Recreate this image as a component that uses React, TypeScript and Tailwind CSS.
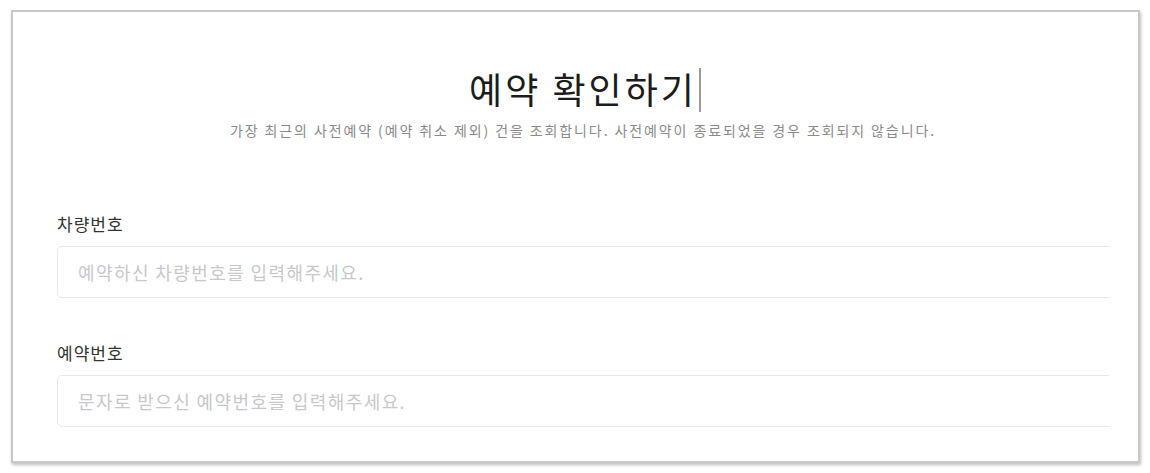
import React from 'react';

const font = { fontFamily: '"Noto Sans CJK KR", "Noto Sans", sans-serif' };

const Field: React.FC<{ label: string; placeholder: string; className?: string }> = ({ label, placeholder, className }) => (
    <div className={className}>
        <label className="block text-[17px] leading-[24px] tracking-[1px] text-[#333333]">{label}</label>
        <div className="mt-[10px] overflow-hidden">
            <input
                type="text"
                placeholder={placeholder}
                className="block w-[1100px] h-[52px] rounded-[5px] border border-[#e6e8ec] bg-white px-[20px] text-[18px] tracking-[1.4px] text-[#333] placeholder:text-[#c5c8ce] outline-none"
            />
        </div>
    </div>
);

export default function App() {
    return (
        <div className="w-[1150px] h-[473px] bg-white pt-[10px] pl-[11px]" style={font}>
            <div className="w-[1129px] h-[453px] border-2 border-[#c8c8c8] bg-white shadow-[1px_2px_3px_rgba(0,0,0,0.25)] pl-[44px] pr-[28px]">
                <div className="w-[1052px]">

                    {/* Heading */}
                    <div className="pt-[54px] text-center">
                        <h1 className="relative inline-block text-[36px] leading-[44px] tracking-[3px] text-[#1c1c1c]">
                            예약 확인하기
                            <span className="absolute right-[-4px] top-[2px] w-[2px] h-[44px] bg-[#9a9a9a]" />
                        </h1>
                        <p className="mt-[10px] text-[14px] leading-[20px] tracking-[1.9px] text-[#8a8a8a]">
                            가장 최근의 사전예약 (예약 취소 제외) 건을 조회합니다. 사전예약이 종료되었을 경우 조회되지 않습니다.
                        </p>
                    </div>

                    {/* Form */}
                    <Field className="mt-[72px]" label="차량번호" placeholder="예약하신 차량번호를 입력해주세요." />
                    <Field className="mt-[43px]" label="예약번호" placeholder="문자로 받으신 예약번호를 입력해주세요." />
                </div>
            </div>
        </div>
    );
}
